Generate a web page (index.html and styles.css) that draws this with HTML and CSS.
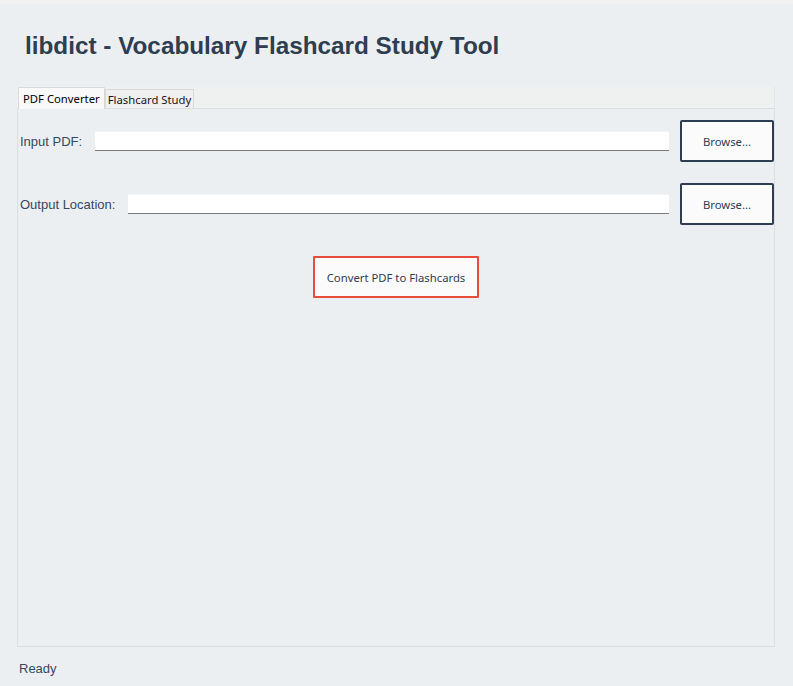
FILE: index.html
```html
<!DOCTYPE html>
<html>
<head>
<meta charset="utf-8">
<link rel="stylesheet" href="styles.css">
</head>
<body>
<div class="topstrip"></div>
<h1 class="title">libdict - Vocabulary Flashcard Study Tool</h1>
<div class="notebook">
  <div class="tabbar">
    <div class="tab tab-active">PDF Converter</div>
    <div class="tab">Flashcard Study</div>
  </div>
  <div class="pane">
    <div class="row">
      <label class="label">Input PDF:</label>
      <div class="entry"></div>
      <button class="btn btn-browse">Browse...</button>
    </div>
    <div class="row row2">
      <label class="label">Output Location:</label>
      <div class="entry"></div>
      <button class="btn btn-browse">Browse...</button>
    </div>
    <div class="convert-wrap">
      <button class="btn btn-convert">Convert PDF to Flashcards</button>
    </div>
  </div>
</div>
<div class="status">Ready</div>
</body>
</html>
```

FILE: styles.css
```css
html, body {
  margin: 0;
  padding: 0;
}
body {
  background: #eceff1;
  width: 793px;
  height: 686px;
  overflow: hidden;
  font-family: "Liberation Sans", Arial, sans-serif;
}
.topstrip {
  height: 4px;
  background: #f2f2f2;
}
.title {
  margin: 0;
  padding: 28px 0 0 25px;
  height: 54px;
  box-sizing: border-box;
  font-family: "Liberation Sans", Arial, sans-serif;
  font-weight: bold;
  font-size: 24.3px;
  line-height: 28px;
  color: #2c3e50;
}
.notebook {
  margin: 29px 18px 0 17px;
}
.tabbar {
  display: flex;
  align-items: flex-end;
  height: 21px;
  background: #eff0f0;
  border-right: 1px solid #e3e5e6;
  box-sizing: border-box;
}
.tab {
  font-family: "Noto Sans", "Open Sans", sans-serif;
  font-size: 11.3px;
  color: #1a1020;
  background: #f0f0f0;
  border: 1px solid #d9d9d9;
  border-bottom: none;
  height: 19px;
  line-height: 20px;
  padding: 0 2px;
  box-sizing: border-box;
}
.tab-active {
  background: #f9f9f9;
  height: 22px;
  line-height: 21px;
  padding: 0 4px;
  color: #000;
  margin-left: 1px;
  position: relative;
  z-index: 1;
  margin-bottom: -1px;
}
.pane {
  height: 539px;
  border: 1px solid #dcdfe1;
  box-sizing: border-box;
  padding: 11px 0 0 2px;
}
.row {
  display: flex;
  align-items: center;
  height: 42px;
}
.row2 {
  margin-top: 21px;
}
.label {
  font-size: 13px;
  color: #34495e;
  margin-right: 13px;
}
.entry {
  flex: 1;
  height: 20px;
  background: #ffffff;
  border-top: 1px solid #f4f4f4;
  border-bottom: 1px solid #7a7a7a;
  box-sizing: border-box;
  margin-right: 11px;
}
.btn {
  font-family: "Noto Sans", "Open Sans", sans-serif;
  font-size: 11.3px;
  color: #2c3e50;
  background: #fbfbfc;
  border-radius: 2px;
  box-sizing: border-box;
  padding: 0;
  cursor: pointer;
}
.btn-browse {
  width: 94px;
  height: 42px;
  border: 2px solid #2c3e50;
}
.convert-wrap {
  display: flex;
  justify-content: center;
  margin-top: 31px;
  padding-right: 2px;
}
.btn-convert {
  width: 166px;
  height: 42px;
  border: 2px solid #e74c3c;
  border-radius: 1px;
}
.status {
  padding: 14px 0 0 19px;
  font-size: 13px;
  color: #34495e;
}
```
